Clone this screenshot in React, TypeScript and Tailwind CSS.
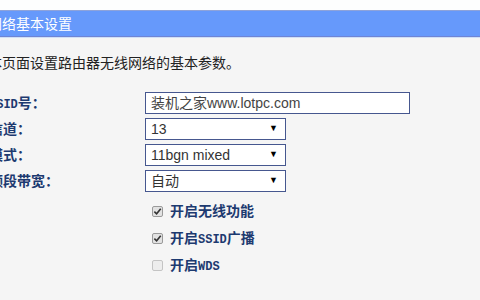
import React from 'react';

const cjk = '"Noto Sans CJK SC", "Liberation Sans", sans-serif';
const mixed = '"Liberation Sans", "Noto Sans CJK SC", sans-serif';

function Mono({ children }: { children: React.ReactNode }) {
  return (
    <span className="text-[12px]" style={{ fontFamily: '"Liberation Mono", monospace' }}>
      {children}
    </span>
  );
}

function Row({ label, children }: { label: React.ReactNode; children: React.ReactNode }) {
  return (
    <div className="flex items-center h-[22px]">
      <span className="-ml-[11px] w-[156px] shrink-0 font-bold text-[14px] text-[#1d3a70] leading-none">
        {label}
      </span>
      {children}
    </div>
  );
}

function Select({ value }: { value: string }) {
  return (
    <div className="w-[141px] h-[22px] bg-white border border-[#46578f] flex items-center justify-between pl-[5px] pr-[7px] text-[14px] text-[#333]">
      <span>{value}</span>
      <span className="text-[9px] text-black">▼</span>
    </div>
  );
}

function Check({ checked, children }: { checked: boolean; children: React.ReactNode }) {
  return (
    <div className="flex items-center gap-[7px] ml-[152px] h-[16px]">
      <span
        className={
          checked
            ? 'w-[11px] h-[11px] rounded-[2px] border border-[#9a9a9a] bg-[#e2e2e2] flex items-center justify-center'
            : 'w-[11px] h-[11px] rounded-[2px] border border-[#c4c4c4] bg-[#ededed]'
        }
      >
        {checked && (
          <svg viewBox="0 0 10 10" className="w-[9px] h-[9px]">
            <path d="M1.5 5.2 L4 7.6 L8.6 2" fill="none" stroke="#333" strokeWidth="1.8" />
          </svg>
        )}
      </span>
      <span className="font-bold text-[14px] text-[#1d3a70] leading-none">{children}</span>
    </div>
  );
}

export default function App() {
  return (
    <div className="w-[480px] h-[300px] overflow-hidden bg-[#f5f5f5]" style={{ fontFamily: mixed }}>
      <div className="h-[10px] bg-[#fdfefe]" />
      {/* Title bar */}
      <div className="h-[27px] bg-[#6699fb] border-t border-[#8ea3da] border-b border-b-[#6f84d4] flex items-center">
        <span className="-ml-[40px] text-white text-[14px]" style={{ fontFamily: cjk }}>
          无线网络基本设置
        </span>
      </div>
      <div className="h-px bg-[#cfe0f7]" />

      <div className="pt-[14px]">
        <p className="-ml-[12px] text-[14px] text-[#222] leading-[20px]" style={{ fontFamily: cjk }}>
          本页面设置路由器无线网络的基本参数。
        </p>

        <div className="mt-[20px] flex flex-col gap-[4px]" style={{ fontFamily: mixed }}>
          <Row label={<><Mono>SSID</Mono>号：</>}>
            <div className="w-[265px] h-[22px] bg-white border border-[#46578f] flex items-center pl-[5px] text-[14px] text-[#444]">
              装机之家www.lotpc.com
            </div>
          </Row>
          <Row label="信道：">
            <Select value="13" />
          </Row>
          <Row label="模式：">
            <Select value="11bgn mixed" />
          </Row>
          <Row label="频段带宽：">
            <Select value="自动" />
          </Row>
        </div>

        <div className="mt-[11px] flex flex-col gap-[11px]">
          <Check checked>开启无线功能</Check>
          <Check checked>
            开启<Mono>SSID</Mono>广播
          </Check>
          <Check checked={false}>
            开启<Mono>WDS</Mono>
          </Check>
        </div>
      </div>
    </div>
  );
}
